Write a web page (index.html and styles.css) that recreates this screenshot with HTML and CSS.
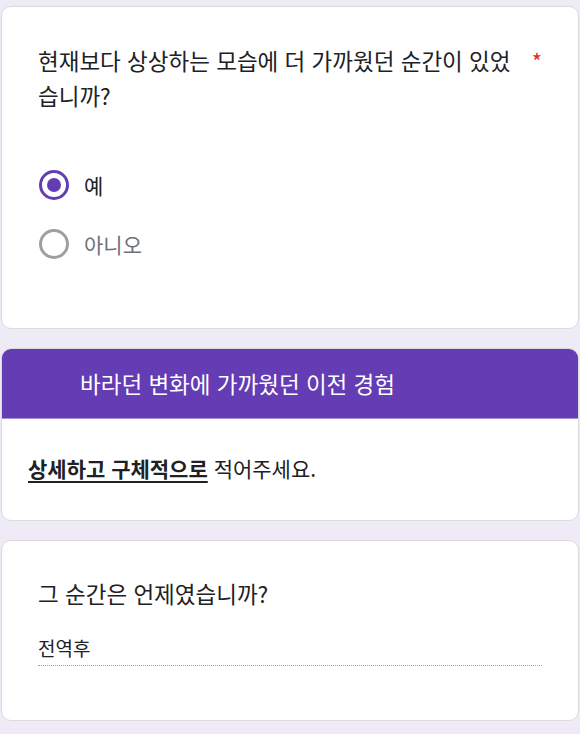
FILE: index.html
```html
<!DOCTYPE html>
<html lang="ko">
<head>
<meta charset="utf-8">
<link rel="stylesheet" href="styles.css">
</head>
<body>
<div class="page">
  <section class="card q1">
    <div class="title-row">
      <div class="title">현재보다 상상하는 모습에 더 가까웠던 순간이 있었습니까?</div>
      <span class="req">*</span>
    </div>
    <div class="options">
      <div class="opt">
        <svg class="radio" width="32" height="32" viewBox="0 0 32 32"><circle cx="16" cy="16" r="13.5" fill="none" stroke="#643cb3" stroke-width="3"/><circle cx="16" cy="16" r="7" fill="#643cb3"/></svg>
        <span class="opt-label on">예</span>
      </div>
      <div class="opt">
        <svg class="radio" width="32" height="32" viewBox="0 0 32 32"><circle cx="16" cy="16" r="13.5" fill="none" stroke="#9e9ea3" stroke-width="3"/></svg>
        <span class="opt-label off">아니오</span>
      </div>
    </div>
  </section>

  <section class="card section">
    <div class="sec-head">바라던 변화에 가까웠던 이전 경험</div>
    <div class="sec-body"><b class="em">상세하고 구체적으로</b> 적어주세요.</div>
  </section>

  <section class="card q3">
    <div class="title">그 순간은 언제였습니까?</div>
    <div class="answer">전역후</div>
    <div class="dots"></div>
  </section>
</div>
</body>
</html>
```
FILE: styles.css
```css
html, body {
  margin: 0;
  padding: 0;
  background: #efebf6;
}
body {
  font-family: "Noto Sans CJK KR", "Noto Sans", Roboto, sans-serif;
  color: #202124;
}
.page {
  display: flex;
  flex-direction: column;
  gap: 19px;
  padding: 6px 1px 0 1px;
}
.card {
  background: #fff;
  border: 1px solid #dcdadf;
  border-radius: 10px;
  box-sizing: border-box;
  width: 578px;
}
.q1 {
  height: 323px;
  padding: 36px 36px 0 36px;
}
.title-row {
  display: flex;
  align-items: flex-start;
}
.title {
  flex: 1;
  font-size: 22.5px;
  line-height: 35px;
}
.req {
  color: #d93025;
  font-size: 22px;
  line-height: 35px;
  margin-left: 14px;
}
.options {
  display: flex;
  flex-direction: column;
  gap: 27px;
  margin-top: 56px;
}
.opt {
  display: flex;
  align-items: center;
  gap: 14px;
}
.radio {
  display: block;
  flex: none;
}
.opt-label {
  font-size: 21px;
  line-height: 32px;
}
.opt-label.off { color: #6f7175; }
.section {
  height: 173px;
  overflow: hidden;
}
.sec-head {
  background: #643cb3;
  color: #fff;
  font-size: 22.5px;
  height: 70px;
  line-height: 70px;
  padding-left: 79px;
  border-bottom: 1px solid #a791d6;
  margin: -1px -1px 0 -1px;
}
.sec-body {
  padding: 34px 26px 0 26px;
  font-size: 21px;
  line-height: 30px;
}
.em {
  font-weight: 700;
  text-decoration: underline;
  text-underline-offset: 4px;
  text-decoration-thickness: 2px;
}
.q3 {
  height: 181px;
  padding: 35px 36px 0 36px;
}
.q3 .title {
  flex: none;
}
.answer {
  font-size: 19px;
  line-height: 30px;
  margin-top: 22px;
}
.dots {
  height: 0;
  border-bottom: 1px dotted #a0a0a4;
  margin-top: 2px;
}
```
